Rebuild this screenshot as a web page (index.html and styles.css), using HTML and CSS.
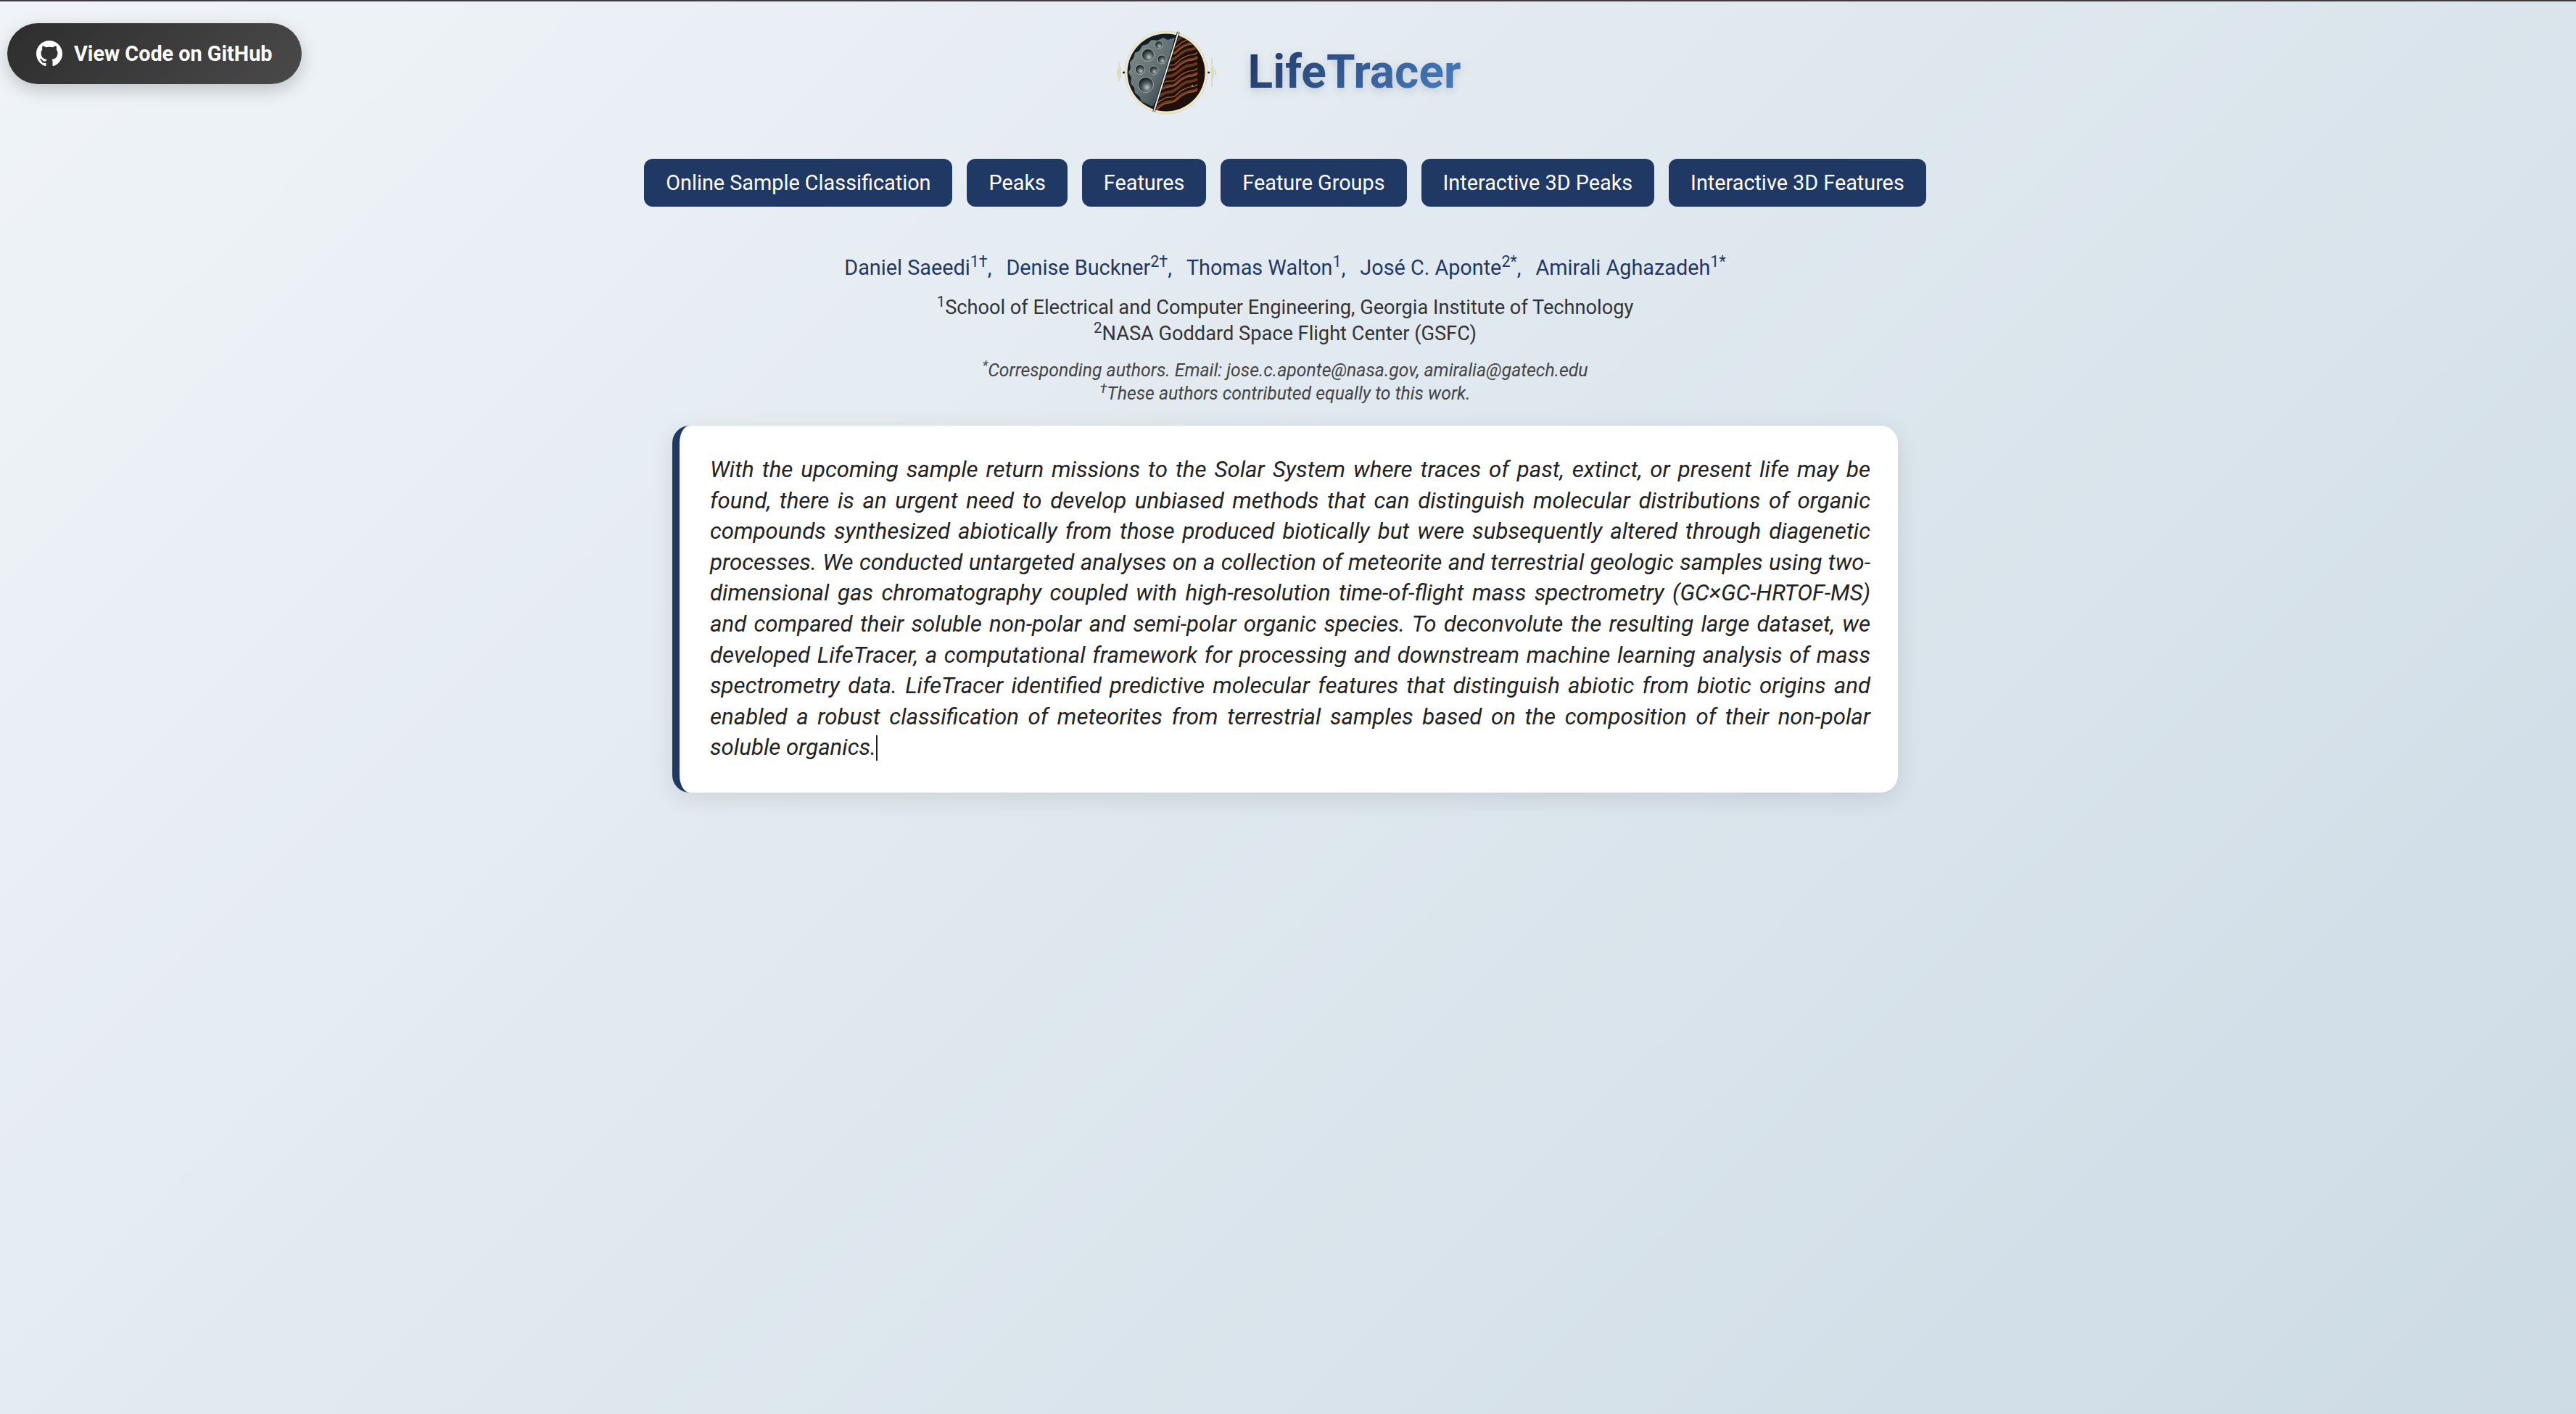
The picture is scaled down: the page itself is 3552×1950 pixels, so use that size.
FILE: index.html
```html
<!DOCTYPE html>
<html lang="en">
<head>
<meta charset="utf-8">
<title>LifeTracer</title>
<link rel="stylesheet" href="styles.css">
</head>
<body>
<div class="top-strip"></div>
<a class="github-btn" href="#">
  <svg class="github-icon" viewBox="0 0 16 16" aria-hidden="true"><path fill="#fff" fill-rule="evenodd" d="M8 0C3.58 0 0 3.58 0 8c0 3.54 2.29 6.53 5.47 7.59.4.07.55-.17.55-.38 0-.19-.01-.82-.01-1.49-2.01.37-2.53-.49-2.69-.94-.09-.23-.48-.94-.82-1.13-.28-.15-.68-.52-.01-.53.63-.01 1.08.58 1.23.82.72 1.21 1.87.87 2.33.66.07-.52.28-.87.51-1.07-1.78-.2-3.64-.89-3.64-3.95 0-.87.31-1.59.82-2.15-.08-.2-.36-1.02.08-2.12 0 0 .67-.21 2.2.82.64-.18 1.32-.27 2-.27.68 0 1.36.09 2 .27 1.53-1.04 2.2-.82 2.2-.82.44 1.1.16 1.92.08 2.12.51.56.82 1.27.82 2.15 0 3.07-1.87 3.75-3.65 3.95.29.25.54.73.54 1.48 0 1.07-.01 1.93-.01 2.2 0 .21.15.46.55.38A8.013 8.013 0 0016 8c0-4.42-3.58-8-8-8z"/></svg>
  <span>View Code on GitHub</span>
</a>
<main class="page">
  <header class="brand">
    <svg class="logo" viewBox="0 0 160 140" aria-hidden="true">
      <defs>
        <clipPath id="disc"><circle cx="80" cy="70" r="53"/></clipPath>
        <clipPath id="rightHalf"><path d="M97 14L63 124L140 130L145 10Z"/></clipPath>
        <radialGradient id="crater" cx="0.58" cy="0.66" r="0.62">
          <stop offset="0" stop-color="#c3c9c3"/>
          <stop offset="0.45" stop-color="#59656a"/>
          <stop offset="1" stop-color="#0f1921"/>
        </radialGradient>
        <linearGradient id="moonFill" x1="0" y1="0" x2="1" y2="1">
          <stop offset="0" stop-color="#9aa49f"/>
          <stop offset="0.55" stop-color="#6b7675"/>
          <stop offset="1" stop-color="#1c2830"/>
        </linearGradient>
        <path id="strand" d="M20 86c6-5 10-1 16-5s8-8 14-9 9 1 15-4 8-8 14-10 9 0 15-5 9-8 15-10 8 0 14-4"/>
        <path id="strandB" d="M20 84c5-1 9-5 15-4s10-6 15-8 10 3 16-3 7-6 13-9 10 2 16-5 8-6 14-9 9 1 14-5"/>
        <filter id="grain" x="0" y="0" width="100%" height="100%">
          <feTurbulence type="fractalNoise" baseFrequency="0.8" numOctaves="2" seed="4"/>
          <feColorMatrix values="0 0 0 0 0.06 0 0 0 0 0.1 0 0 0 0 0.13 0 0 0 1.2 -0.3"/>
          <feComposite in2="SourceGraphic" operator="in"/>
          <feMerge><feMergeNode in="SourceGraphic"/><feMergeNode/></feMerge>
        </filter>
      </defs>
      <path d="M1 70H22M138 70H160" stroke="#efe9c8" stroke-width="1.2"/>
      <path d="M15 56V82M143 50V90M13 66V75M17 62V78M145 62V78M148 66V74" stroke="#d9d3ae" stroke-width="1.3"/>
      <path d="M20 70H26M134 70H140" stroke="#141d25" stroke-width="2.5"/>
      <circle cx="80" cy="70" r="57" fill="#eee6cd"/>
      <circle cx="80" cy="70" r="57" fill="none" stroke="#d8cba5" stroke-width="1" stroke-dasharray="2 2"/>
      <circle cx="80" cy="70" r="53.5" fill="#101c26"/>
      <g clip-path="url(#disc)">
        <path filter="url(#grain)" fill="url(#moonFill)" d="M92 22L82 25L76 22L68 26L60 25L54 31L47 33L43 40L37 43L35 50L30 56L31 64L28 70L32 77L31 85L36 91L37 98L43 103L46 110L53 113L61 117L66 110L78 72Z"/>
        <g fill="url(#crater)" stroke="#c9cec8" stroke-width="0.7">
          <circle cx="55" cy="46" r="8.5"/>
          <circle cx="70" cy="32" r="5.5"/>
          <circle cx="74" cy="52" r="6"/>
          <circle cx="44" cy="66" r="6.7"/>
          <circle cx="63" cy="67" r="6"/>
          <circle cx="52" cy="87" r="10.5"/>
        </g>
        <g clip-path="url(#rightHalf)">
          <rect x="55" y="10" width="95" height="125" fill="#1f100c"/>
          <g fill="none" stroke="#6a371e" stroke-width="3.6">
            <use href="#strand" y="-48"/><use href="#strandB" y="-37"/><use href="#strand" y="-26"/>
            <use href="#strandB" y="-15"/><use href="#strand" y="-4"/><use href="#strandB" y="7"/>
            <use href="#strand" y="18"/><use href="#strandB" y="29"/><use href="#strand" y="40"/><use href="#strandB" y="51"/>
          </g>
          <g fill="none" stroke="#a9603a" stroke-width="1.3">
            <use href="#strandB" y="-43"/><use href="#strand" y="-33"/><use href="#strandB" y="-21"/>
            <use href="#strand" y="-11"/><use href="#strandB" y="1"/><use href="#strand" y="11"/>
            <use href="#strandB" y="23"/><use href="#strand" y="33"/><use href="#strandB" y="45"/><use href="#strand" y="55"/>
          </g>
          <circle cx="116" cy="88" r="1" fill="#e2c9b0"/>
        </g>
      </g>
      <path d="M97 14L63 124" stroke="#141d25" stroke-width="3.6"/>
      <path d="M97 14L63 124" stroke="#f6f3e6" stroke-width="1.8"/>
    </svg>
    <h1 class="title">LifeTracer</h1>
  </header>

  <nav class="tabs">
    <a class="tab" href="#">Online Sample Classification</a>
    <a class="tab" href="#">Peaks</a>
    <a class="tab" href="#">Features</a>
    <a class="tab" href="#">Feature Groups</a>
    <a class="tab" href="#">Interactive 3D Peaks</a>
    <a class="tab" href="#">Interactive 3D Features</a>
  </nav>

  <p class="authors">
    <span>Daniel Saeedi<sup>1†</sup>,</span>
    <span>Denise Buckner<sup>2†</sup>,</span>
    <span>Thomas Walton<sup>1</sup>,</span>
    <span>José C. Aponte<sup>2*</sup>,</span>
    <span>Amirali Aghazadeh<sup>1*</sup></span>
  </p>
  <p class="affiliations"><sup>1</sup>School of Electrical and Computer Engineering, Georgia Institute of Technology<br><sup>2</sup>NASA Goddard Space Flight Center (GSFC)</p>
  <p class="notes"><sup>*</sup>Corresponding authors. Email: jose.c.aponte@nasa.gov, amiralia@gatech.edu<br><sup>†</sup>These authors contributed equally to this work.</p>

  <section class="abstract">
    <p>With the upcoming sample return missions to the Solar System where traces of past, extinct, or present life may be found, there is an urgent need to develop unbiased methods that can distinguish molecular distributions of organic compounds synthesized abiotically from those produced biotically but were subsequently altered through diagenetic processes. We conducted untargeted analyses on a collection of meteorite and terrestrial geologic samples using two-dimensional gas chromatography coupled with high-resolution time-of-flight mass spectrometry (GC×GC-HRTOF-MS) and compared their soluble non-polar and semi-polar organic species. To deconvolute the resulting large dataset, we developed LifeTracer, a computational framework for processing and downstream machine learning analysis of mass spectrometry data. LifeTracer identified predictive molecular features that distinguish abiotic from biotic origins and enabled a robust classification of meteorites from terrestrial samples based on the composition of their non-polar soluble organics.<span class="caret"></span></p>
  </section>
</main>
</body>
</html>
```
FILE: styles.css
```css
* { box-sizing: border-box; }
html, body { height: 100%; }
body {
  margin: 0;
  min-height: 1950px;
  overflow: hidden;
  font-family: Roboto, "Liberation Sans", sans-serif;
  background: linear-gradient(135deg, #f0f4f8 0%, #cddbe5 100%);
  color: #2c2c2c;
}
.top-strip { height: 2px; background: #443c3a; }
.github-btn {
  position: absolute;
  left: 10px;
  top: 32px;
  width: 406px;
  height: 84px;
  border-radius: 42px;
  padding-left: 40px;
  display: flex;
  align-items: center;
  gap: 16px;
  background: linear-gradient(135deg, #2d2d2d 0%, #4a4a4a 100%);
  box-shadow: 0 8px 24px rgba(0, 0, 0, 0.2);
  color: #fff;
  font-size: 28.8px;
  font-weight: 700;
  text-decoration: none;
}
.github-icon { width: 36px; height: 36px; flex: none; }
.page { width: 3544px; display: flex; flex-direction: column; align-items: center; }
.brand {
  display: flex;
  align-items: center;
  gap: 33px;
  height: 196px;
  margin-right: 2px;
}
.logo { width: 160px; height: 140px; flex: none; }
.title {
  margin: 0;
  font-size: 64px;
  line-height: 1.2;
  font-weight: 700;
  background: linear-gradient(135deg, #1f3864 0%, #4a7fc1 100%);
  -webkit-background-clip: text;
  background-clip: text;
  color: transparent;
  filter: drop-shadow(0 4px 6px rgba(31, 56, 100, 0.18));
}
.tabs { display: flex; gap: 20px; margin-top: 21px; }
.tab {
  height: 66px;
  padding: 0 30px;
  display: flex;
  align-items: center;
  border-radius: 12px;
  background: #1f3864;
  color: #fff;
  font-size: 28.8px;
  text-decoration: none;
}
.authors {
  margin: 62px 0 0;
  display: flex;
  gap: 20px;
  color: #1f3864;
  font-size: 28.8px;
  line-height: 44px;
}
sup { font-size: 0.75em; line-height: 0; }
.affiliations {
  margin: 15px 0 0;
  text-align: center;
  font-size: 27.2px;
  line-height: 36px;
  color: #333;
}
.notes {
  margin: 17px 0 0;
  text-align: center;
  font-size: 24.8px;
  font-style: italic;
  line-height: 32px;
  color: #444;
}
.abstract {
  width: 1690px;
  margin-top: 28px;
  padding: 40px 38px 40px 42px;
  background: #fff;
  border-left: 10px solid #1f3864;
  border-radius: 24px;
  box-shadow: 0 8px 32px rgba(0, 0, 0, 0.1);
}
.abstract p {
  margin: 0;
  text-align: justify;
  font-size: 31.2px;
  font-style: italic;
  line-height: 42.6px;
  color: #222;
}
.caret {
  display: inline-block;
  width: 2px;
  height: 35px;
  vertical-align: -8px;
  background: #222;
}
```
